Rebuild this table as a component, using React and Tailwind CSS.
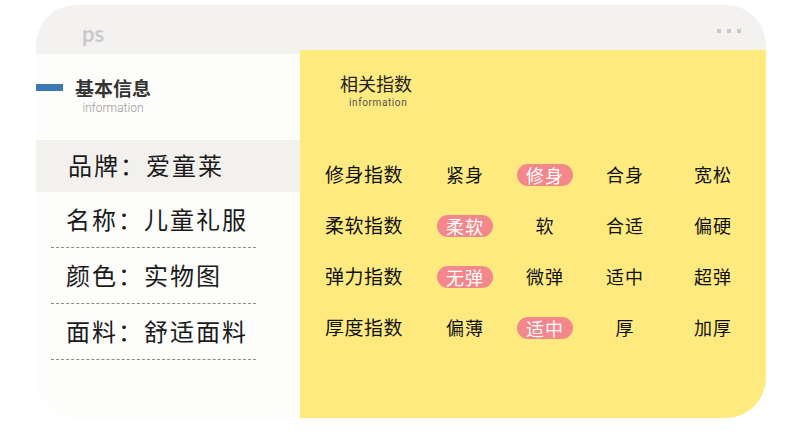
import React from "react";

const rows = [
  { label: "修身指数", items: ["紧身", "修身", "合身", "宽松"], on: 1 },
  { label: "柔软指数", items: ["柔软", "软", "合适", "偏硬"], on: 0 },
  { label: "弹力指数", items: ["无弹", "微弹", "适中", "超弹"], on: 0 },
  { label: "厚度指数", items: ["偏薄", "适中", "厚", "加厚"], on: 1 },
];

const colW = ["w-[80px]", "w-[80px]", "w-[80px]", "w-[96px]"];

const info = [
  { text: "品牌：爱童莱", shade: true },
  { text: "名称：儿童礼服" },
  { text: "颜色：实物图" },
  { text: "面料：舒适面料" },
];

export default function App() {
  return (
    <div
      className="w-[790px] h-[435px] bg-white pl-[36px] pt-[5px]"
      style={{ fontFamily: '"Noto Sans CJK SC", "Noto Sans", sans-serif' }}
    >
      <div className="w-[730px] h-[413px] rounded-[40px] overflow-hidden flex flex-col bg-[#fdfdfb]">
        {/* top bar */}
        <div className="h-[49px] shrink-0 bg-[#f3f2f0] flex items-center justify-between pl-[46px] pr-[25px]">
          <span className="text-[22px] font-bold text-[#cacaca] leading-none mt-[8px]" style={{ fontFamily: "Lato, sans-serif" }}>
            ps
          </span>
          <div className="flex gap-[6px] mt-[2px]">
            <span className="w-[4px] h-[4px] bg-[#c8c8c8]"></span>
            <span className="w-[4px] h-[4px] bg-[#c8c8c8]"></span>
            <span className="w-[4px] h-[4px] bg-[#c8c8c8]"></span>
          </div>
        </div>

        <div className="flex flex-1">
          {/* left panel */}
          <div className="w-[264px] shrink-0 flex flex-col">
            <div className="flex items-start pt-[22px] h-[86px]">
              <span className="w-[27px] h-[7px] bg-[#3b79b4] mt-[8px]"></span>
              <div className="ml-[12px] flex flex-col items-center">
                <span className="text-[19px] font-bold text-[#333] leading-[24px]">基本信息</span>
                <span className="text-[12px] text-[#999] leading-[14px] mt-[1px]" style={{ fontFamily: "Roboto, sans-serif", fontWeight: 300 }}>
                  information
                </span>
              </div>
            </div>
            {info.map((r, i) =>
              r.shade ? (
                <div key={i} className="h-[52px] bg-[#f3f1ed] flex items-center pl-[32px]">
                  <span className="text-[24px] tracking-[2px] text-[#1a1a1a] -mt-[3px]">{r.text}</span>
                </div>
              ) : (
                <div key={i} className="ml-[15px] w-[205px] h-[56px] border-b border-dashed border-[#8a8a8a] flex items-center pl-[15px]">
                  <span className="text-[24px] tracking-[2px] text-[#1a1a1a] -mt-[2px]">{r.text}</span>
                </div>
              )
            )}
          </div>

          {/* right panel */}
          <div className="flex-1 -mt-[4px] bg-[#ffea80] pl-[25px] pt-[22px]">
            <div className="flex flex-col items-start pl-[15px]">
              <span className="text-[18px] text-[#222] leading-[22px]">相关指数</span>
              <span className="text-[10px] text-[#555] tracking-[0.6px] leading-[14px] ml-[9px] mt-[2px]" style={{ fontFamily: "Roboto, sans-serif" }}>
                information
              </span>
            </div>
            <div className="mt-[39px] flex flex-col">
              {rows.map((row, ri) => (
                <div key={ri} className="h-[51px] flex items-center">
                  <span className="w-[100px] text-[19px] text-[#111] tracking-[0.5px]">{row.label}</span>
                  {row.items.map((it, ci) => (
                    <div key={ci} className={`${colW[ci]} flex justify-center`}>
                      {ci === row.on ? (
                        <span className="w-[56px] h-[22px] rounded-full bg-[#f4878b] text-white text-[18px] leading-[22px] text-center tracking-[1px]">
                          {it}
                        </span>
                      ) : (
                        <span className="text-[18px] text-[#111] tracking-[1px]">{it}</span>
                      )}
                    </div>
                  ))}
                </div>
              ))}
            </div>
          </div>
        </div>
      </div>
    </div>
  );
}
